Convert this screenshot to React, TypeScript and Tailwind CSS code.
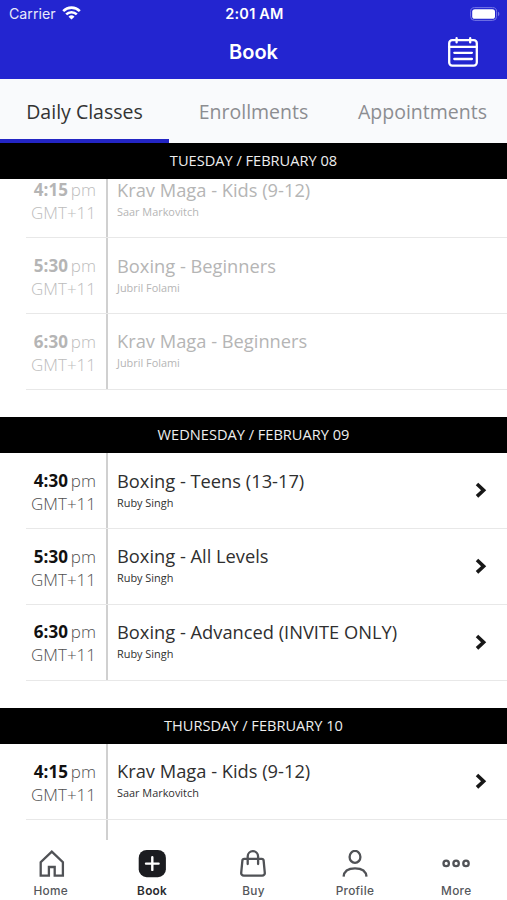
import React from "react";

type ClassItem = {
  id: number;
  time: string;
  title: string;
  teacher: string;
};

type Day = {
  id: number;
  label: string;
  past?: boolean;
  classes: ClassItem[];
};

const days: Day[] = [
  {
    id: 1,
    label: 'TUESDAY / FEBRUARY 08',
    past: true,
    classes: [
      { id: 1, time: '4:15', title: 'Krav Maga - Kids (9-12)', teacher: 'Saar Markovitch' },
      { id: 2, time: '5:30', title: 'Boxing - Beginners', teacher: 'Jubril Folami' },
      { id: 3, time: '6:30', title: 'Krav Maga - Beginners', teacher: 'Jubril Folami' },
    ],
  },
  {
    id: 2,
    label: 'WEDNESDAY / FEBRUARY 09',
    classes: [
      { id: 4, time: '4:30', title: 'Boxing - Teens (13-17)', teacher: 'Ruby Singh' },
      { id: 5, time: '5:30', title: 'Boxing - All Levels', teacher: 'Ruby Singh' },
      { id: 6, time: '6:30', title: 'Boxing - Advanced (INVITE ONLY)', teacher: 'Ruby Singh' },
    ],
  },
  {
    id: 3,
    label: 'THURSDAY / FEBRUARY 10',
    classes: [
      { id: 7, time: '4:15', title: 'Krav Maga - Kids (9-12)', teacher: 'Saar Markovitch' },
    ],
  },
];

function StatusBar() {
  return (
    <div className="grid h-[27px] grid-cols-3 items-center pl-[9px] pr-[7px] text-white">
      <div className="flex items-center gap-[6px]">
        <span className="text-[14.2px] opacity-90">Carrier</span>
        <svg width="19" height="14" viewBox="0 0 19 14" fill="none" stroke="currentColor" strokeWidth="2.6">
          <path d="M1.2 5.1a11.7 11.7 0 0 1 16.6 0" />
          <path d="M4.2 8.4a7.5 7.5 0 0 1 10.6 0" />
          <path d="M9.5 13.6 6.5 10.7a4.3 4.3 0 0 1 6 0Z" fill="currentColor" stroke="none" />
        </svg>
      </div>
      <span className="text-center text-[14.5px] font-semibold tracking-[0.2px]">2:01 AM</span>
      <svg className="justify-self-end" width="30" height="14" viewBox="0 0 30 14">
        <rect x="0.6" y="0.6" width="26" height="12.8" rx="4" fill="none" stroke="#7576e6" strokeWidth="1" />
        <rect x="2.2" y="2.2" width="22.8" height="9.6" rx="2.6" fill="#fff" />
        <path d="M28 4.8c1.8.6 1.8 3.8 0 4.4Z" fill="#7576e6" />
      </svg>
    </div>
  );
}

function CalendarIcon() {
  return (
    <svg width="30" height="30" viewBox="0 0 30 30" fill="none" stroke="#fff" strokeWidth="2.3" strokeLinecap="round">
      <rect x="1.2" y="3.2" width="27.6" height="25.4" rx="3" />
      <path d="M1 9.8h28M8.6 1.2v4.2M22.2 1.2v4.2" />
      <path d="M6.3 15.8h17.6M6.3 22h17.6" />
    </svg>
  );
}

function ClassRow({ item, past }: { item: ClassItem; past?: boolean }) {
  return (
    <div className="ml-[26px] flex h-[75.75px] shrink-0 border-b border-[#e8e8e8]">
      <div className={`flex w-[82px] shrink-0 flex-col items-end border-r-2 border-[#d0d0d0] pr-[10px] pt-[15.6px] text-[17px] leading-[23px] ${past ? 'text-[#b5b5b5]' : 'text-[#111]'}`}>
        <span className="flex gap-[3px] whitespace-nowrap">
          <b className="font-bold">{item.time}</b>
          <span className={past ? 'font-light text-[#bcbcbc]' : 'font-light text-[#505050]'}>pm</span>
        </span>
        <span className={past ? 'font-light text-[#bcbcbc]' : 'font-light text-[#505050]'}>GMT+11</span>
      </div>
      <div className={`min-w-0 flex-1 whitespace-nowrap pl-[9px] pt-[14.4px] ${past ? 'text-[#b5b5b5]' : 'text-[#2f2f2f]'}`}>
        <h3 className="text-[18.3px] leading-[26px]">{item.title}</h3>
        <p className="text-[10.9px] leading-[18px]">{item.teacher}</p>
      </div>
      {!past && (
        <svg className="mr-[20px] mt-[29px]" width="12" height="16" viewBox="0 0 12 16" fill="none" stroke="#171717" strokeWidth="3.6">
          <path d="m2 2 6.600 6.200L2 14.400" />
        </svg>
      )}
    </div>
  );
}

function DaySection({ day }: { day: Day }) {
  return (
    <section className="mb-[27px] shrink-0">
      <h2 className="flex h-[36.5px] items-center justify-center bg-black text-[14.6px] text-[#eee]">
        {day.label}
      </h2>
      <div className="overflow-hidden">
        <div className={day.past ? '-mt-[16.5px]' : ''}>
          {day.classes.map((c) => (
            <ClassRow key={c.id} item={c} past={day.past} />
          ))}
          {/* the last day goes on below the tab bar */}
          {day.id === 3 && <div className="ml-[26px] h-[75px] w-[82px] border-r-2 border-[#d0d0d0]" />}
        </div>
      </div>
    </section>
  );
}

const navItems = [
  {
    label: 'Home',
    icon: <path d="M3.7 25.6V12.2L14.8 1.6l11.1 10.6v13.4h-8.200v-8.600h-5.800v8.600Z" />,
  },
  {
    label: 'Book',
    active: true,
    icon: (
      <>
        <rect x="0.7" y="0" width="27.2" height="27.2" rx="8" fill="#1b1c20" stroke="none" />
        <path d="M14.3 7.3v12.6M8 13.6h12.6" stroke="#fff" strokeWidth="2.4" strokeLinecap="round" />
      </>
    ),
  },
  {
    label: 'Buy',
    icon: (
      <>
        <path d="M5.200 8.800h17.600a1.800 1.800 0 0 1 1.800 1.600l1.200 12.400a2.600 2.600 0 0 1-2.600 2.900H4.800a2.600 2.600 0 0 1-2.600-2.900l1.200-12.400a1.800 1.800 0 0 1 1.800-1.600Z" />
        <path d="M8.700 14V6.400a5.200 5.200 0 0 1 10.400 0V14" strokeLinecap="round" />
      </>
    ),
  },
  {
    label: 'Profile',
    icon: (
      <>
        <ellipse cx="14" cy="6.9" rx="5.4" ry="6" />
        <path d="M2.600 26.600c.5-5.700 4-8.300 11.400-8.300S25 20.900 25.500 26.600" />
      </>
    ),
  },
  {
    label: 'More',
    icon: (
      <>
        <circle cx="4.2" cy="13.4" r="2.7" />
        <circle cx="14.1" cy="13.4" r="2.7" />
        <circle cx="24" cy="13.4" r="2.7" />
      </>
    ),
  },
];

function App() {
  return (
    <div className="flex h-[900px] w-[507px] flex-col overflow-hidden bg-white font-['Open_Sans',sans-serif]">
      <header className="h-[79px] shrink-0 bg-[#2325d0] font-['Inter',sans-serif]">
        <StatusBar />
        <div className="grid h-[50px] grid-cols-[1fr_auto_1fr] items-center pr-[29px] text-white">
          <h1 className="col-start-2 pl-[29px] text-[20px] font-semibold">Book</h1>
          <div className="justify-self-end"><CalendarIcon /></div>
        </div>
      </header>

      <nav className="grid h-[63.5px] shrink-0 grid-cols-3 bg-[#f9fafc] text-center text-[19.5px] text-[#8c8d91]">
        <span className="border-b-4 border-[#2325c4] pt-[18px] text-[#333]">Daily Classes</span>
        <span className="pt-[18px]">Enrollments</span>
        <span className="pt-[18px]">Appointments</span>
      </nav>

      <main className="flex min-h-0 flex-1 flex-col overflow-hidden">
        {days.map((day) => (
          <DaySection key={day.id} day={day} />
        ))}
      </main>

      <footer className="grid h-[60px] shrink-0 grid-cols-5 bg-white pt-[10px] font-['Inter',sans-serif]">
        {navItems.map((n) => (
          <div key={n.label} className="flex flex-col items-center">
            <svg width="28" height="28" viewBox="0 0 28 28" fill="none" stroke="#505256" strokeWidth="2.3">
              {n.icon}
            </svg>
            <span className={`mt-[5px] text-[11.8px] leading-[16px] tracking-[0.3px] ${n.active ? 'font-semibold text-[#2b2c30]' : 'font-medium text-[#55575b]'}`}>
              {n.label}
            </span>
          </div>
        ))}
      </footer>
    </div>
  );
}

export default App;
